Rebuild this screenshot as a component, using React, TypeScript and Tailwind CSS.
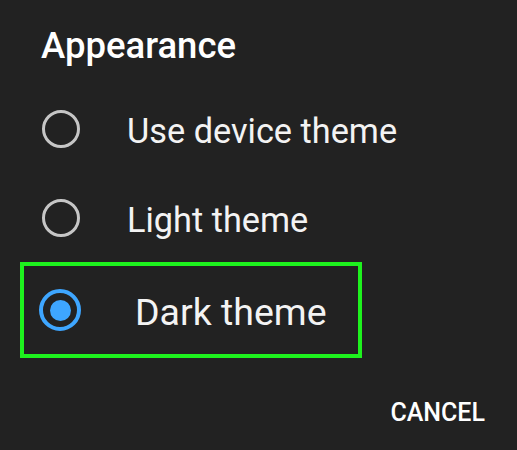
import React from "react";

function Radio({ checked }: { checked?: boolean }) {
  if (checked) {
    return (
      <div className="w-[42px] h-[42px] rounded-full border-4 border-[#3ea6ff] flex items-center justify-center shrink-0">
        <div className="w-[21px] h-[21px] rounded-full bg-[#3ea6ff]" />
      </div>
    );
  }
  return <div className="w-[38px] h-[38px] rounded-full border-[3px] border-[#c6c6c6] shrink-0" />;
}

export default function App() {
  return (
    <div className="w-[517px] h-[450px] bg-[#222222] overflow-hidden font-['Roboto',sans-serif] text-[#f3f3f3]">
      <div className="pl-[41px] pt-[25px] text-[36.5px] leading-[42px] font-medium text-white">Appearance</div>
      <div className="mt-[17px] h-[90px] flex items-center pl-[42px]">
        <Radio />
        <span className="ml-[47px] pt-[4px] text-[34.3px] leading-[40px]">Use device theme</span>
      </div>
      <div className="h-[88px] flex items-center pl-[42px]">
        <Radio />
        <span className="ml-[47px] pt-[4px] text-[34.3px] leading-[40px]">Light theme</span>
      </div>
      <div className="ml-[20px] w-[342px] h-[96px] border-4 border-[#1ef21e] flex items-center pl-[15px]">
        <Radio checked />
        <span className="ml-[54px] pt-[4px] text-[37.5px] leading-[44px]">Dark theme</span>
      </div>
      <div className="mt-[39px] flex justify-end pr-[32px]">
        <span className="pt-[1px] text-[25px] leading-[30px] font-medium text-white">CANCEL</span>
      </div>
    </div>
  );
}
